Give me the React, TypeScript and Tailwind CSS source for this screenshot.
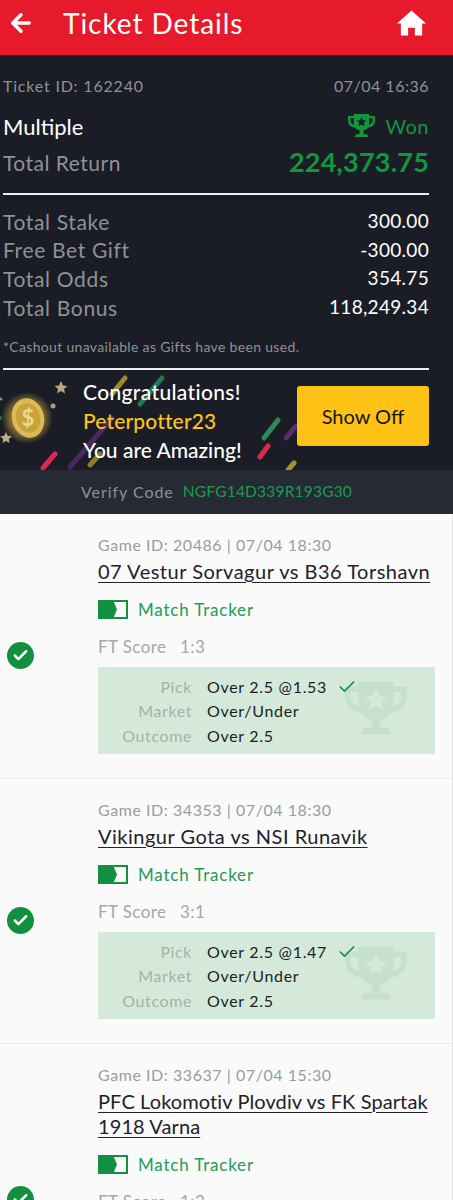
import { ArrowLeft, Check } from 'lucide-react'

interface Game {
  id: string
  time: string
  title: string
  score: string
  pick: string
  tall?: boolean
}

const games: Game[] = [
  { id: '20486', time: '07/04 18:30', title: '07 Vestur Sorvagur vs B36 Torshavn', score: '1:3', pick: 'Over 2.5 @1.53' },
  { id: '34353', time: '07/04 18:30', title: 'Vikingur Gota vs NSI Runavik', score: '3:1', pick: 'Over 2.5 @1.47' },
  { id: '33637', time: '07/04 15:30', title: 'PFC Lokomotiv Plovdiv vs FK Spartak 1918 Varna', score: '1:2', pick: 'Over 2.5 @1.40', tall: true },
]

const totals = [
  { label: 'Total Stake', value: '300.00' },
  { label: 'Free Bet Gift', value: '-300.00' },
  { label: 'Total Odds', value: '354.75' },
  { label: 'Total Bonus', value: '118,249.34' },
]

function Trophy({ className, star }: { className: string; star: string }) {
  return (
    <svg viewBox="0 0 28 26" className={className} fill="currentColor">
      <path d="M6 0h16v2h6v5c0 4-3 6.500-7 7-1 1.500-3 2.700-5 3v4h4l1 3H7l1-3h4v-4c-2-.3-4-1.500-5-3-4-.5-7-3-7-7V2h6zM2.500 4.500V7c0 2 1.500 3.500 3.800 4.200C6 9.500 6 7 6 4.500zm23 0H22c0 2.500 0 5-.3 6.700C24 10.500 25.500 9 25.500 7z" />
      <path fill={star} d="M14 3l1.500 3.400 3.700.4-2.800 2.400.8 3.600-3.200-1.900-3.200 1.900.8-3.600-2.800-2.400 3.700-.4z" />
    </svg>
  )
}

function Confetti() {
  return (
    <svg viewBox="0 0 300 100" className="absolute left-0 top-0 h-[100px] w-[300px]">
      <defs>
        <radialGradient id="glow">
          <stop offset="55%" stopColor="#c9a53f" stopOpacity="0.7" />
          <stop offset="100%" stopColor="#c9a53f" stopOpacity="0" />
        </radialGradient>
      </defs>
      <g strokeWidth="5" strokeLinecap="round" fill="none">
        <path d="M43 98L55 84" stroke="#d92b4f" />
        <path d="M70 97L112 48" stroke="#4a2a5e" strokeWidth="5" />
        <path d="M90 95L100 84" stroke="#8f7a26" />
        <path d="M112 24L125 8" stroke="#a08a30" />
        <path d="M140 34L162 8" stroke="#1f7a50" />
        <path d="M264 68L278 50" stroke="#2e8b57" />
        <path d="M260 87L268 76" stroke="#d92b4f" />
        <path d="M286 68L296 56" stroke="#54306e" />
        <path d="M288 100L294 93" stroke="#a68f2b" />
      </g>
      <circle cx="27" cy="48" r="26" fill="url(#glow)" />
      <ellipse cx="28" cy="48" rx="16" ry="20" fill="#dcbb55" transform="rotate(-15 28 48)" />
      <ellipse cx="28" cy="48" rx="12" ry="15" fill="#c8a23a" transform="rotate(-15 28 48)" />
      <text x="28" y="56" textAnchor="middle" fontSize="22" fontWeight="700" fill="#ecd78e" fontFamily="Lato, sans-serif">$</text>
      <path d="M61 11l2 4.500 4.500.5-3.500 3 1 4.500-4-2.500-4 2.500 1-4.500-3.500-3 4.500-.5z" fill="#b8a878" />
      <path d="M6 62l1.800 3.800 4 .5-3 2.700.8 4-3.600-2-3.600 2 .8-4-3-2.700 4-.5z" fill="#b8ad8a" />
      <circle cx="53" cy="36" r="2.500" fill="#a89f8c" />
      <circle cx="1" cy="29" r="1.500" fill="#8d8a80" />
      <circle cx="0" cy="48" r="2" fill="#1f7a50" />
    </svg>
  )
}

function GameCard({ game }: { game: Game }) {
  return (
    <div className={`flex border-b border-[#ebebeb] ${game.tall ? 'h-[293px]' : 'h-[265px]'}`}>
      <div className="flex w-[98px] shrink-0 items-center pl-[7px] pt-[19px]">
        <div className="flex h-[27px] w-[27px] items-center justify-center rounded-full bg-[#12903f]">
          <Check size={17} strokeWidth={3.5} className="text-white" />
        </div>
      </div>
      <div className="w-[337px] pt-[20px]">
        <p className="text-[16px] leading-[21px] tracking-[0.55px] text-[#9a9ca1]">
          Game ID: {game.id} | {game.time}
        </p>
        <p className={`mt-[4px] text-[20px] leading-[25px] text-[#20222a] underline decoration-1 underline-offset-[3px] ${game.tall ? 'tracking-[0.1px]' : 'tracking-[0.5px]'}`}>
          {game.title}
        </p>
        <div className="mt-[16px] flex h-[20px] items-center gap-[10px]">
          <svg viewBox="0 0 30 19" className="h-[19px] w-[30px]">
            <path d="M0 0h30v19H0z" fill="#12903f" />
            <path d="M2 2h26v15H2z" fill="#fafafa" />
            <path d="M0 0h15l4 9.500-4 9.500H0z" fill="#12903f" />
          </svg>
          <span className="text-[17px] leading-[20px] tracking-[0.8px] text-[#239a55]">Match Tracker</span>
        </div>
        <p className="mt-[16px] text-[17px] leading-[22px] tracking-[0.4px] text-[#a5a7ab]">
          FT Score <span className="ml-[9px]">{game.score}</span>
        </p>
        <div className="relative mt-[9px] h-[87px] overflow-hidden bg-[#d5e9da] pt-[8px]">
          <Trophy className="absolute left-[245px] top-[15px] h-[57px] w-[66px] text-[#c5e0cc]" star="#d5e9da" />
          <div className="relative grid grid-cols-[94px_auto] justify-start gap-x-[15px] text-[16px] leading-[24.500px]">
            <span className="text-right tracking-[0.6px] text-[#a3b3a8]">Pick</span>
            <span className="flex items-center gap-[10px] tracking-[0.7px] text-[#1b1d24]">
              {game.pick}
              <Check size={20} strokeWidth={2} className="text-[#12903f]" />
            </span>
            <span className="text-right tracking-[0.6px] text-[#a3b3a8]">Market</span>
            <span className="tracking-[0.7px] text-[#1b1d24]">Over/Under</span>
            <span className="text-right tracking-[0.6px] text-[#a3b3a8]">Outcome</span>
            <span className="tracking-[0.7px] text-[#1b1d24]">Over 2.5</span>
          </div>
        </div>
      </div>
    </div>
  )
}

export default function App() {
  return (
    <div className="h-[1200px] w-[453px] overflow-hidden bg-[#fafafa] font-['Lato',sans-serif]">
      {/* Top bar */}
      <header className="flex h-[55px] items-center bg-[#e61a2b] pb-[9px] pl-[7px] pr-[27px] text-white">
        <ArrowLeft size={28} strokeWidth={3} />
        <h1 className="ml-[28px] flex-1 text-[28px] leading-[34px] tracking-[0.95px]">Ticket Details</h1>
        <svg viewBox="0 0 30 26" className="h-[26px] w-[29px]" fill="currentColor">
          <path d="M15 0L30 13.500h-4V26h-7.500v-8h-7v8H4V13.500H0z" />
        </svg>
      </header>

      {/* Summary */}
      <section className="bg-[#1a1d26] px-[3px] pt-[21px]">
        <div className="w-[426px]">
          <div className="flex items-center justify-between text-[16px] leading-[20px] text-[#8f9196]">
            <span className="tracking-[0.8px]">Ticket ID: 162240</span>
            <span className="tracking-[0.5px]">07/04 16:36</span>
          </div>
          <div className="mt-[14px] flex h-[32px] items-center justify-between">
            <span className="text-[22px] text-white">Multiple</span>
            <span className="flex items-center gap-[10px] text-[20px] tracking-[0.5px] text-[#14953f]">
              <Trophy className="h-[25px] w-[27px]" star="#1a1d26" />
              Won
            </span>
          </div>
          <div className="mt-[2px] flex h-[37px] items-center justify-between">
            <span className="text-[21px] tracking-[0.5px] text-[#8f9196]">Total Return</span>
            <span className="text-[27px] font-bold tracking-[0.2px] text-[#14953f]">224,373.75</span>
          </div>
          <div className="mt-[12px] h-[2px] bg-[#eef0f4]" />
          <div className="mt-[12px]">
            {totals.map((row) => (
              <div key={row.label} className="flex h-[28.700px] items-center justify-between text-[21px]">
                <span className="tracking-[0.65px] text-[#8f9196]">{row.label}</span>
                <span className="text-[19px] tracking-[0.3px] text-white">{row.value}</span>
              </div>
            ))}
          </div>
          <p className="mt-[15px] text-[14px] leading-[20px] tracking-[0.33px] text-[#8f9196]">
            *Cashout unavailable as Gifts have been used.
          </p>
          <div className="mt-[11px] h-[2px] bg-[#eef0f4]" />
        </div>
      </section>

      {/* Congrats banner */}
      <section className="relative flex h-[100px] items-center bg-[#1a1d26] pl-[83px]">
        <Confetti />
        <div className="relative mt-[2px] w-[214px] text-[21px] font-medium leading-[29px] text-white">
          <p className="tracking-[0.35px]">Congratulations!</p>
          <p className="tracking-[0.15px] text-[#fec41a]">Peterpotter23</p>
          <p>You are Amazing!</p>
        </div>
        <button className="relative mb-[8px] flex h-[60px] w-[132px] items-center justify-center rounded-[3px] bg-[#fec116] text-[20px] text-[#14151a]">
          Show Off
        </button>
      </section>

      {/* Verify code */}
      <section className="flex h-[44px] items-center gap-[9px] bg-[#252a34] pl-[81px] text-[16px]">
        <span className="tracking-[0.95px] text-[#8f9196]">Verify Code</span>
        <span className="text-[15.500px] tracking-[0.2px] text-[#1c9c50]">NGFG14D339R193G30</span>
      </section>

      {/* Selections */}
      <div className="border-r border-[#e4e4e4]">
        {games.map((game) => (
          <GameCard key={game.id} game={game} />
        ))}
      </div>
    </div>
  )
}
